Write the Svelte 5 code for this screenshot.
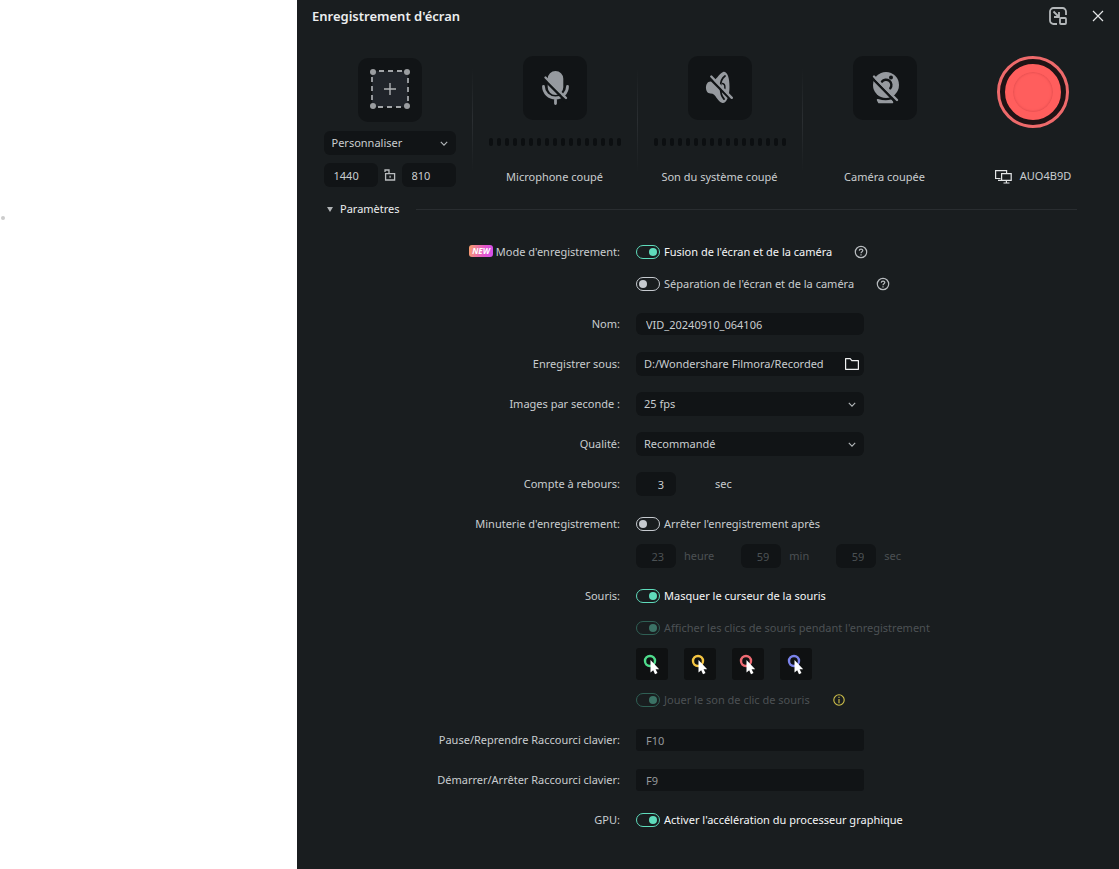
<script>
  let size = "Personnaliser";
  let width = "1440";
  let height = "810";
  let open = true;

  let merge = true;
  let name = "VID_20240910_064106";
  let folder = "D:/Wondershare Filmora/Recorded";
  let fps = "25 fps";
  let quality = "Recommandé";
  let countdown = "3";
  let timer = false;
  let duration = [
    { id: "hours", value: "23", unit: "heure" },
    { id: "minutes", value: "59", unit: "min" },
    { id: "seconds", value: "59", unit: "sec" },
  ];
  let hideCursor = true;
  let showClicks = true;
  let clickSound = true;
  let gpu = true;

  let clickColors = [
    { name: "Vert", color: "#4fdc8c" },
    { name: "Jaune", color: "#f5c542" },
    { name: "Rouge", color: "#ef6b73" },
    { name: "Bleu", color: "#7a83ea" },
  ];
  let clickColor = "Vert";

  const bars = Array(17);
</script>

<main>
  <aside><span class="dot"></span></aside>

  <section class="window">
    <header>
      <h1>Enregistrement d'écran</h1>
      <button type="button" class="icon" aria-label="Réduire">
        <svg width="20" height="20" viewBox="0 0 20 20" fill="none" stroke="#b4b8ba" stroke-width="1.8">
          <path d="M9 18H5.500A3.500 3.500 0 0 1 2 14.500v-9A3.500 3.500 0 0 1 5.500 2h9A3.500 3.500 0 0 1 18 5.500V9" />
          <path d="M5.500 5.500l5 5M11 6v5H6" />
          <rect x="12" y="12" width="6" height="6" rx="1" />
        </svg>
      </button>
      <button type="button" class="icon" aria-label="Fermer">
        <svg width="12" height="12" viewBox="0 0 12 12" stroke="#e4e6e7" stroke-width="1.2">
          <path d="M1 1l10 10M11 1L1 11" />
        </svg>
      </button>
    </header>

    <div class="sources">
      <div class="source area">
        <button type="button" class="tile" aria-label="Zone d'enregistrement">
          <svg width="64" height="64" viewBox="0 0 64 64">
            <rect x="14" y="13" width="36" height="36" fill="#20242a" />
            <path d="M14 13h36v36H14z" fill="none" stroke="#a2a5a8" stroke-width="1.800" stroke-dasharray="5 4" stroke-dashoffset="2" />
            <g fill="#9a9da0">
              <circle cx="15" cy="14" r="3" />
              <circle cx="49" cy="14" r="3" />
              <circle cx="15" cy="48" r="3" />
              <circle cx="49" cy="48" r="3" />
            </g>
            <path d="M26 31h12M32 25v12" stroke="#b0b3b5" stroke-width="1.400" />
          </svg>
        </button>
        <div class="select">
          <select aria-label="Taille" bind:value={size}>
            <option>Personnaliser</option>
            <option>Plein écran</option>
          </select>
          <svg width="8" height="5" viewBox="0 0 10 6"><path d="M1 1l4 4 4-4" /></svg>
        </div>
        <div class="dims">
          <input aria-label="Largeur" bind:value={width} />
          <svg width="12" height="12" viewBox="0 0 12 12" fill="none" stroke="#b9bcbe" stroke-width="1.300">
            <path d="M1.600 4.600h9v6.400h-9zM1 3V1h4v3" />
            <path d="M6.100 6.800v2" />
          </svg>
          <input aria-label="Hauteur" bind:value={height} />
        </div>
      </div>

      <div class="source">
        <button type="button" class="tile" aria-label="Microphone">
          <svg width="64" height="64" viewBox="0 0 64 64" fill="none" stroke-linecap="round">
            <path d="M32.500 15a7.800 7.800 0 0 1 7.800 7.800v8.400a7.800 7.800 0 0 1-15.600 0v-8.400a7.800 7.800 0 0 1 7.800-7.800z" fill="#969a9f" />
            <path d="M20.500 30.500a12 11.500 0 0 0 24 0M32.500 42v5.500" stroke="#969a9f" stroke-width="2.800" />
            <path d="M20.800 23.200l21.500 21.500" stroke="#111416" stroke-width="2.600" />
            <path d="M22.500 21.500l20.500 20.500" stroke="#969a9f" stroke-width="2.400" />
          </svg>
        </button>
        <div class="meter">{#each bars as _}<i></i>{/each}</div>
        <p>Microphone coupé</p>
      </div>

      <div class="source">
        <button type="button" class="tile" aria-label="Son du système">
          <svg width="64" height="64" viewBox="0 0 64 64" fill="none" stroke-linecap="round">
            <path d="M35.500 15.800C30.500 17.500 28.500 25.500 22.500 25.500c-6 0-6 12 0 12 6 0 6.500 8.500 12 9.500 4 .5 7-7 7-16s-2-15.500-6-15.200z" fill="#969a9f" />
            <path d="M37 20c-3 2-4.500 5.500-4.500 11s1 9.500 3.500 12" stroke="#111416" stroke-width="1.800" />
            <path d="M34.500 27.500c3 .5 3.500 6.500 0 7.500" stroke="#111416" stroke-width="1.400" />
            <path d="M21.500 22.200l21 21" stroke="#111416" stroke-width="2.600" />
            <path d="M23.300 20.500l20.500 21.300" stroke="#969a9f" stroke-width="2.400" />
          </svg>
        </button>
        <div class="meter">{#each bars as _}<i></i>{/each}</div>
        <p>Son du système coupé</p>
      </div>

      <div class="source">
        <button type="button" class="tile" aria-label="Caméra">
          <svg width="64" height="64" viewBox="0 0 64 64" fill="none" stroke-linecap="round">
            <circle cx="33" cy="29" r="13" fill="#969a9f" />
            <circle cx="38" cy="21.500" r="2" fill="#111416" />
            <path d="M28.800 25.800a5.300 5.300 0 0 1 8.500 6.500" stroke="#111416" stroke-width="2.400" />
            <path d="M24.800 44c5 1.500 10 1.500 13.500.5l1 1.800H26z" fill="#969a9f" stroke="#969a9f" stroke-width="2" stroke-linejoin="round" />
            <path d="M19.300 22.200l22.500 23" stroke="#111416" stroke-width="2.600" />
            <path d="M21 20.500l23 23.500" stroke="#969a9f" stroke-width="2.400" />
          </svg>
        </button>
        <div class="meter"></div>
        <p>Caméra coupée</p>
      </div>

      <div class="source">
        <button type="button" class="record" aria-label="Enregistrer"><span></span></button>
        <p class="screen">
          <svg width="17" height="15" viewBox="0 0 17 15" fill="none" stroke="#e2e4e5" stroke-width="1.200">
            <path d="M5.500 9.500H.6V1.600h11V4M3 11.400h3" />
            <path d="M6.600 4.600h9.600v6.800H6.600zM11.400 11.400V14M8.500 14h6" />
          </svg>
          AUO4B9D
        </p>
      </div>
    </div>

    <div class="params">
      <button type="button" aria-expanded={open} on:click={() => (open = !open)}>
        <svg width="6" height="5" viewBox="0 0 6 5"><path d="M0 0h6L3 5z" fill="#b0b3b5" /></svg>
        Paramètres
      </button>
      <hr />
    </div>

    {#if open}
      <form on:submit|preventDefault>
        <div class="row">
          <span class="label"><em>NEW</em>Mode d'enregistrement:</span>
          <div class="fields">
            <div class="line">
              <label class="toggle" class:on={merge}>
                <input type="checkbox" bind:checked={merge} />Fusion de l'écran et de la caméra
              </label>
              <svg class="help" width="14" height="14" viewBox="0 0 14 14" fill="none" stroke="#b9bdc0" stroke-width="1.200">
                <circle cx="7" cy="7" r="5.700" />
                <path d="M5.300 5.800c0-2.200 3.500-2.200 3.500-.2C8.800 6.800 7 6.800 7 8.200M7 9.200v1.200" />
              </svg>
            </div>
            <div class="line">
              <label class="toggle">
                <input type="checkbox" checked={!merge} on:change={() => (merge = !merge)} />Séparation de l'écran et de la caméra
              </label>
              <svg class="help" width="14" height="14" viewBox="0 0 14 14" fill="none" stroke="#b9bdc0" stroke-width="1.200">
                <circle cx="7" cy="7" r="5.700" />
                <path d="M5.300 5.800c0-2.200 3.500-2.200 3.500-.2C8.800 6.800 7 6.800 7 8.200M7 9.200v1.200" />
              </svg>
            </div>
          </div>
        </div>

        <div class="row">
          <label class="label" for="name">Nom:</label>
          <div class="line"><input id="name" class="box name" bind:value={name} /></div>
        </div>

        <div class="row">
          <label class="label" for="folder">Enregistrer sous:</label>
          <div class="line">
            <div class="box path">
              <input id="folder" bind:value={folder} />
              <button type="button" class="icon" aria-label="Parcourir">
                <svg width="14" height="12" viewBox="0 0 14 12" fill="none" stroke="#f0f1f2" stroke-width="1.200">
                  <path d="M.6 11.300V.7h4.600l1.600 2h6.600v8.600z" stroke-linejoin="round" />
                </svg>
              </button>
            </div>
          </div>
        </div>

        <div class="row">
          <label class="label" for="fps">Images par seconde :</label>
          <div class="line">
            <div class="select wide">
              <select id="fps" bind:value={fps}>
                <option>25 fps</option>
                <option>30 fps</option>
                <option>60 fps</option>
              </select>
              <svg width="8" height="5" viewBox="0 0 10 6"><path d="M1 1l4 4 4-4" /></svg>
            </div>
          </div>
        </div>

        <div class="row">
          <label class="label" for="quality">Qualité:</label>
          <div class="line">
            <div class="select wide">
              <select id="quality" bind:value={quality}>
                <option>Recommandé</option>
                <option>Haute</option>
              </select>
              <svg width="8" height="5" viewBox="0 0 10 6"><path d="M1 1l4 4 4-4" /></svg>
            </div>
          </div>
        </div>

        <div class="row">
          <label class="label" for="countdown">Compte à rebours:</label>
          <div class="line countdown">
            <input id="countdown" class="num" bind:value={countdown} />
            <span>sec</span>
          </div>
        </div>

        <div class="row">
          <span class="label">Minuterie d'enregistrement:</span>
          <div class="fields">
            <div class="line">
              <label class="toggle">
                <input type="checkbox" bind:checked={timer} />Arrêter l'enregistrement après
              </label>
            </div>
            <div class="line duration" class:disabled={!timer}>
              {#each duration as d}
                <div class="unit">
                  <input id={d.id} class="num" bind:value={d.value} disabled={!timer} />
                  <label for={d.id}>{d.unit}</label>
                </div>
              {/each}
            </div>
          </div>
        </div>

        <div class="row">
          <span class="label">Souris:</span>
          <div class="fields">
            <div class="line">
              <label class="toggle" class:on={hideCursor}>
                <input type="checkbox" bind:checked={hideCursor} />Masquer le curseur de la souris
              </label>
            </div>
            <div class="line">
              <label class="toggle" class:disabled={hideCursor}>
                <input type="checkbox" bind:checked={showClicks} disabled={hideCursor} />Afficher les clics de souris pendant l'enregistrement
              </label>
            </div>
            <div class="swatches">
              {#each clickColors as c}
                <button type="button" aria-label={c.name} aria-pressed={clickColor == c.name} on:click={() => (clickColor = c.name)}>
                  <svg width="32" height="32" viewBox="0 0 32 32">
                    <circle cx="14" cy="13" r="5" fill="none" stroke={c.color} stroke-width="2.400" />
                    <path d="M14.500 12v12.500l2.700-2.300 1.800 4 2.500-1.200-1.900-3.800h3.600z" fill="#fff" />
                  </svg>
                </button>
              {/each}
            </div>
            <div class="line">
              <label class="toggle" class:disabled={hideCursor}>
                <input type="checkbox" bind:checked={clickSound} disabled={hideCursor} />Jouer le son de clic de souris
              </label>
              <svg class="help" width="14" height="14" viewBox="0 0 14 14" fill="none" stroke="#cfc04a" stroke-width="1.100">
                <circle cx="7" cy="7" r="5.200" />
                <path d="M7 3.800v1.300M7 6v4.200" />
              </svg>
            </div>
          </div>
        </div>

        <div class="row">
          <label class="label" for="pause">Pause/Reprendre Raccourci clavier:</label>
          <div class="line"><input id="pause" class="box name key" value="F10" readonly /></div>
        </div>

        <div class="row">
          <label class="label" for="start">Démarrer/Arrêter Raccourci clavier:</label>
          <div class="line"><input id="start" class="box name key" value="F9" readonly /></div>
        </div>

        <div class="row">
          <span class="label">GPU:</span>
          <div class="line">
            <label class="toggle" class:on={gpu}>
              <input type="checkbox" bind:checked={gpu} />Activer l'accélération du processeur graphique
            </label>
          </div>
        </div>
      </form>
    {/if}
  </section>
</main>

<style>
  :global(body) {
    background: #fff;
  }

  main {
    display: flex;
    min-height: 100vh;
    font: 11px/18px "Noto Sans", "Open Sans", sans-serif;
    color: #c9cdd0;
  }

  aside {
    flex: 0 0 297px;
    padding-top: 216px;
    box-sizing: border-box;
  }

  .dot {
    display: block;
    width: 4px;
    height: 4px;
    margin-left: 1px;
    border-radius: 50%;
    background: #ccc;
  }

  .window {
    flex: 1;
    min-width: 0;
    background: #191d1f;
  }

  button, input, select {
    font: inherit;
    color: inherit;
    background: none;
    border: none;
    margin: 0;
    padding: 0;
    box-sizing: border-box;
    min-width: 0;
  }

  button {
    cursor: pointer;
  }

  svg {
    display: block;
    flex: none;
  }

  header {
    display: flex;
    align-items: center;
    gap: 24px;
    height: 32px;
    padding: 0 15px;
  }

  h1 {
    flex: 1;
    margin: 0;
    font-size: 13px;
    font-weight: 600;
    color: #eceeef;
  }

  /* recording sources */
  .sources {
    display: grid;
    grid-template-columns: repeat(4, 5fr) 4fr;
    padding: 24px 20px 0 10px;
  }

  .source {
    position: relative;
    display: flex;
    flex-direction: column;
    align-items: center;
  }

  .source:nth-child(-n + 3)::after {
    content: "";
    position: absolute;
    top: 12px;
    right: -1px;
    width: 1px;
    height: 104px;
    background: linear-gradient(transparent, #2a2e31, transparent);
  }

  .source p {
    margin: 22px 0 0;
  }

  .tile {
    width: 64px;
    height: 64px;
    border-radius: 10px;
    background: #111416;
  }

  .area .tile {
    margin-top: 2px;
  }

  .area .select {
    width: 132px;
    margin: 9px 0 8px;
  }

  .dims {
    display: flex;
    align-items: center;
    justify-content: space-between;
    width: 132px;
  }

  .dims input {
    width: 54px;
    height: 24px;
    padding-left: 10px;
    border-radius: 6px;
    background: #111416;
  }

  .meter {
    display: flex;
    gap: 4px;
    height: 8px;
    margin-top: 18px;
  }

  .meter i {
    width: 4px;
    border-radius: 2px;
    background: #0c0f11;
  }

  .record {
    display: flex;
    padding: 5px;
    width: 72px;
    height: 72px;
    border: 3px solid #ee6a6b;
    border-radius: 50%;
    background: #1f1315;
  }

  .record span {
    flex: 1;
    align-self: stretch;
    border: 8px solid #ff5e5d;
    border-radius: 50%;
    background: #ff5e5d;
    box-shadow: inset 0 0 2px 1px #e95152;
  }

  .source .screen {
    display: flex;
    align-items: center;
    gap: 8px;
    margin-top: 39px;
  }

  .params {
    display: flex;
    align-items: center;
    gap: 16px;
    height: 22px;
    padding: 0 42px 0 30px;
    margin-top: 11px;
  }

  .params button {
    display: flex;
    align-items: center;
    gap: 7px;
    color: #eceeef;
  }

  hr {
    flex: 1;
    margin: 0;
    border: none;
    border-top: 1px solid #292d30;
  }

  /* settings */
  form {
    display: flex;
    flex-direction: column;
    gap: 16px;
    padding: 20px 0 36px 1px;
  }

  .row {
    display: grid;
    grid-template-columns: 2fr 3fr;
    gap: 16px;
  }

  .label {
    line-height: 24px;
    text-align: right;
  }

  em {
    display: inline-block;
    margin-right: 3px;
    padding: 0 3px;
    border-radius: 3px;
    background: linear-gradient(100deg, #f8a06a, #e558c8 60%, #d34df0);
    color: #fff;
    font-size: 8px;
    font-weight: 700;
    line-height: 12px;
    vertical-align: 2px;
  }

  .fields {
    display: flex;
    flex-direction: column;
    gap: 8px;
  }

  .line {
    display: flex;
    align-items: center;
    height: 24px;
  }

  .toggle {
    display: flex;
    align-items: center;
    gap: 4px;
    white-space: nowrap;
  }

  .toggle input {
    appearance: none;
    display: flex;
    align-items: center;
    width: 24px;
    height: 14px;
    padding: 0 2px;
    border: 1px solid #c6cacf;
    border-radius: 7px;
  }

  .toggle input::before {
    content: "";
    width: 8px;
    height: 8px;
    border-radius: 50%;
    background: #c6cacf;
  }

  .toggle input:checked {
    justify-content: flex-end;
    border-color: #5fdcbc;
  }

  .toggle input:checked::before {
    background: #5fdcbc;
  }

  .toggle input:disabled {
    border-color: #2f5f54;
  }

  .toggle input:disabled::before {
    background: #3b7265;
  }

  .on {
    color: #f5f6f7;
  }

  .disabled {
    color: #4c5154;
  }

  .help {
    margin-left: 22px;
  }

  .box {
    box-sizing: border-box;
    width: 228px;
    height: 24px;
    border-radius: 6px;
    background: #111416;
  }

  .name {
    height: 22px;
    padding: 0 10px;
  }

  .key {
    border-radius: 3px;
    color: #94989b;
  }

  .path {
    display: flex;
    align-items: center;
    padding: 0 5px 0 8px;
  }

  .path input {
    flex: 1;
  }

  .select {
    display: grid;
    align-items: center;
    height: 24px;
    border-radius: 6px;
    background: #111416;
  }

  .select select, .select svg {
    grid-area: 1 / 1;
  }

  .select select {
    appearance: none;
    height: 24px;
    padding-left: 8px;
  }

  .select svg {
    justify-self: end;
    margin-right: 8px;
    fill: none;
    stroke: #b4b8ba;
    stroke-width: 1.4;
    pointer-events: none;
  }

  .wide {
    width: 228px;
  }

  .num {
    width: 40px;
    height: 24px;
    padding-right: 12px;
    border-radius: 6px;
    background: #111416;
    text-align: right;
  }

  .countdown {
    gap: 39px;
  }

  .duration {
    gap: 27px;
  }

  .unit {
    display: flex;
    align-items: center;
    gap: 8px;
  }

  .swatches {
    display: flex;
    gap: 16px;
  }

  .swatches button {
    width: 32px;
    height: 32px;
    border-radius: 3px;
    background: #0f1112;
  }
</style>
